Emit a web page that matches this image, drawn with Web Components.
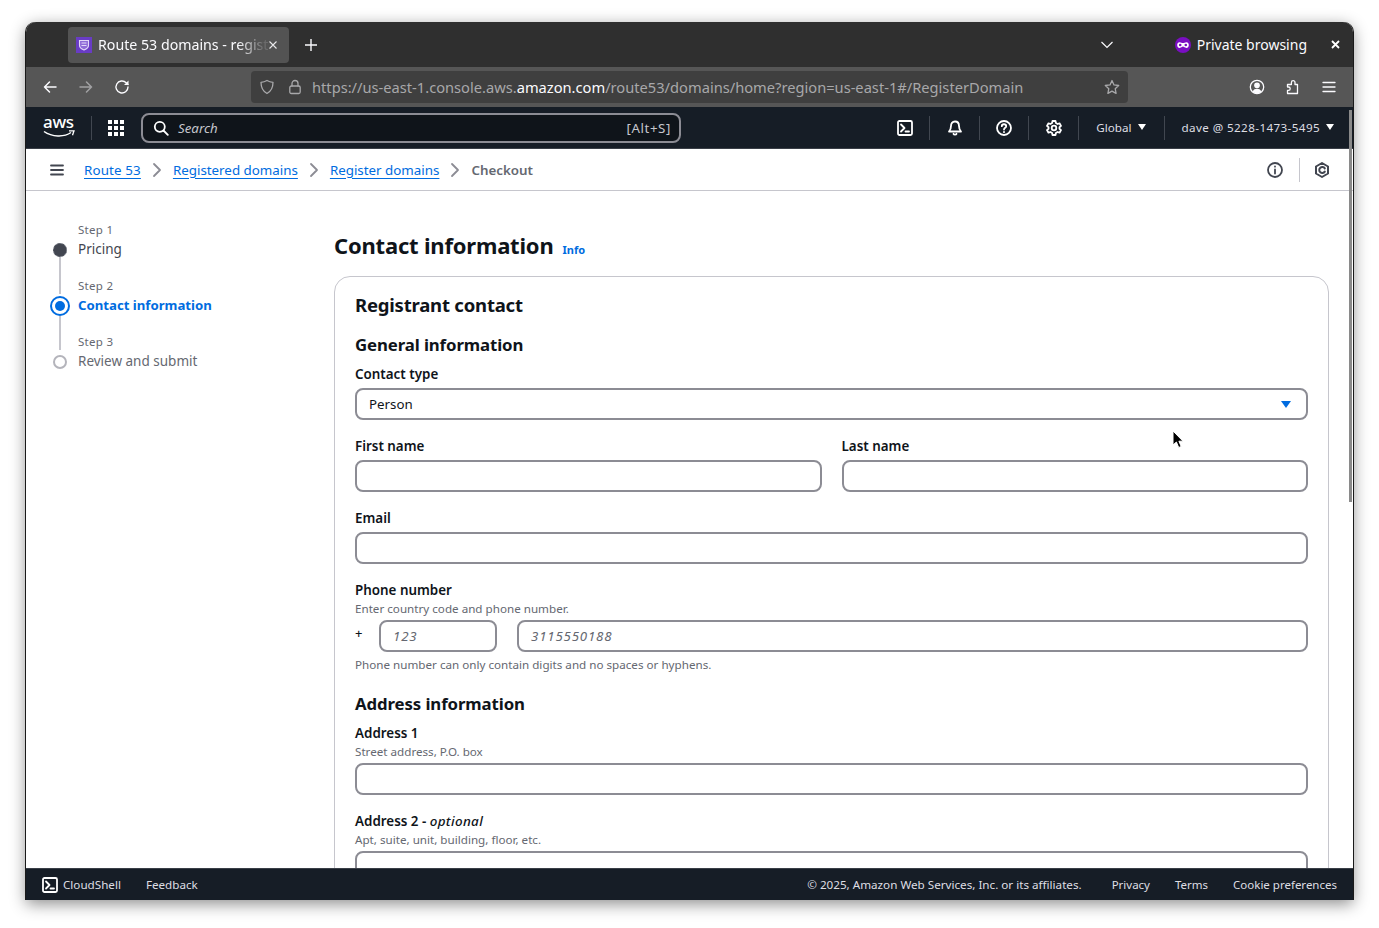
<!DOCTYPE html>
<html>
<head>
<meta charset="utf-8">
<title>Route 53 domains</title>
<style>
html, body { margin: 0; height: 100%; background: #fff; overflow: hidden; }
body { padding: 22px 25px 0 26px; box-sizing: border-box; font-family: "Noto Sans", sans-serif; }
</style>
</head>
<body>
<app-window>
  <browser-tabs></browser-tabs>
  <browser-toolbar></browser-toolbar>
  <aws-topnav></aws-topnav>
  <aws-breadcrumbs></aws-breadcrumbs>
  <wizard-page>
    <wizard-steps slot="steps"></wizard-steps>
    <contact-form></contact-form>
  </wizard-page>
  <aws-footer></aws-footer>
</app-window>

<script>
// svg bodies for the icons, 16x16 box, stroke is currentColor
const ICONS = {
  back: '<path d="M14 8H2.5M7.5 3 2.5 8l5 5"/>',
  forward: '<path d="M2 8h11.5M8.5 3l5 5-5 5"/>',
  reload: '<path d="M14 8a6 6 0 1 1-1.800-4.300L14 5.500"/><path d="M14.500 1.500V6H10z" fill="currentColor" stroke="none"/>',
  shield: '<path d="M8 1.500c2 1.200 3.800 1.700 6 1.800 0 5.200-1.800 9-6 11.200C3.800 12.300 2 8.500 2 3.300c2.200-.1 4-.6 6-1.800z"/>',
  lock: '<rect x="2.800" y="7" width="10.400" height="7.500" rx="1.500"/><path d="M5 7V4.500a3 3 0 0 1 6 0V7"/>',
  star: '<path d="m8 1.500 2 4.400 4.700.6-3.500 3.200.9 4.700L8 12.100l-4.100 2.300.9-4.700L1.300 6.500 6 5.900z"/>',
  account: '<circle cx="8" cy="8" r="6.700"/><circle cx="8" cy="6.300" r="2.200" fill="currentColor"/><path d="M3.600 12.500c1-2 2.600-2.700 4.400-2.700s3.400.7 4.400 2.700c-1.200 1.300-2.700 1.900-4.400 1.900s-3.200-.6-4.400-1.900z" fill="currentColor" stroke="none"/>',
  puzzle: '<path d="M2.500 14.500h10V5.500H10v-2a1.800 1.800 0 0 0-3.600 0v2H2.500V8h1a1.700 1.700 0 0 1 0 3.400h-1z"/>',
  menu: '<path d="M2 3.500h12M2 8h12M2 12.500h12"/>',
  grid: '<g fill="currentColor" stroke="none"><rect x="0" y="0" width="4" height="4"/><rect x="6" y="0" width="4" height="4"/><rect x="12" y="0" width="4" height="4"/><rect x="0" y="6" width="4" height="4"/><rect x="6" y="6" width="4" height="4"/><rect x="12" y="6" width="4" height="4"/><rect x="0" y="12" width="4" height="4"/><rect x="6" y="12" width="4" height="4"/><rect x="12" y="12" width="4" height="4"/></g>',
  search: '<circle cx="6.800" cy="6.800" r="5"/><path d="m10.500 10.500 4.300 4.300"/>',
  shell: '<rect x="1" y="1" width="14" height="14" rx="1.500"/><path d="m4 4.500 3.500 3.500L4 11.500M8.500 11.500h3.500"/>',
  bell: '<path d="M8 1.500c2.800 0 4 2 4 4.500 0 2.500.6 4 2 5.500H2c1.400-1.500 2-3 2-5.500 0-2.500 1.200-4.500 4-4.500z"/><path d="M6.500 13.800c.4 1 2.600 1 3 0"/>',
  help: '<circle cx="8" cy="8" r="7"/><path d="M5.800 6.200C5.800 3.600 10.200 3.600 10.200 6.200 10.200 7.900 8 7.800 8 9.600"/><path d="M8 11.800v.4"/>',
  gear: '<path d="M6.500 1h3l.4 2 1.700 1 1.900-.7 1.500 2.600-1.500 1.300v1.600l1.500 1.300-1.500 2.600-1.900-.7-1.700 1-.4 2h-3l-.4-2-1.700-1-1.900.7L1 10.100l1.500-1.300V7.200L1 5.900l1.500-2.600 1.900.7 1.700-1z"/><circle cx="8" cy="8" r="2.300"/>',
  info: '<circle cx="8" cy="8" r="7"/><path d="M8 7.500v4M8 4.400v.3"/>',
  hexagon: '<path d="M8 1 14 4.500v7L8 15l-6-3.500v-7z"/><path d="M10.800 6.400A3 3 0 1 0 10.800 9.600"/>',
  chevron: '<path d="m5 2 6 6-6 6"/>'
};

// base class, every element here just sets a template string in its shadow root
class BaseElement extends HTMLElement {
  constructor() {
    super();
    this.attachShadow({ mode: "open" });
  }
  connectedCallback() {
    this.render();
  }
  render() {
    const template = document.createElement("template");
    template.innerHTML = this.html;
    this.shadowRoot.appendChild(template.content.cloneNode(true));
  }
}

class UiIcon extends BaseElement {
  get html() {
    const size = this.getAttribute("size") || 16;
    const width = this.getAttribute("stroke") || 2;
    return `
<style>:host { display: inline-flex; flex: none; }
svg { display: block; fill: none; stroke: currentColor; stroke-linecap: round; stroke-linejoin: round; }
</style>
<svg width="${size}" height="${size}" viewBox="0 0 16 16" stroke-width="${width}">${ICONS[this.getAttribute("name")]}</svg>`;
  }
}
customElements.define("ui-icon", UiIcon);

class AppWindow extends BaseElement {
  get html() {
    return `
<style>:host {
  display: flex;
  flex-direction: column;
  position: relative;
  width: 1327px;
  height: 878px;
  border-radius: 10px 10px 0 0;
  box-shadow: -1px 0 0 #1a1a1a, 1px 0 0 #1a1a1a, 0 4px 16px rgba(0,0,0,.45);
}
.clip { display: flex; flex-direction: column; height: 100%; border-radius: 10px 10px 0 0; overflow: hidden; }
.thumb { position: absolute; right: 1px; top: 88px; width: 3px; height: 392px; background: #8a8a8a; }
</style>
<div class="clip"><slot></slot></div>
<span class="thumb"></span>`;
  }
}
customElements.define("app-window", AppWindow);

class BrowserTabs extends BaseElement {
  get html() {
    return `
<style>:host {
  display: flex;
  align-items: center;
  flex: none;
  height: 45px;
  background: #2f2f2f;
  color: #fbfbfe;
  font: 14px "Noto Sans", sans-serif;
}
.tab { display: flex; align-items: center; box-sizing: border-box; width: 221px; height: 36px; margin: 0 0 0 42px; padding: 0 0 0 8px; background: #535353; border-radius: 4px; }
.fav { width: 16px; height: 16px; flex: none; }
.title { width: 170px; margin-left: 6px; white-space: nowrap; font-size: 14.200px; -webkit-mask-image: linear-gradient(to right, #000 82%, rgba(0,0,0,.15) 97%); mask-image: linear-gradient(to right, #000 82%, rgba(0,0,0,.15) 97%); }
.x { flex: none; margin-left: 1px; }
.plus { margin-left: 16px; display: flex; }
.fill { flex: 1; }
.list { margin-right: 62px; display: flex; }
.priv { display: flex; align-items: center; gap: 6px; margin-right: 24px; }
.close { margin-right: 13px; display: flex; }
</style>
<div class="tab">
  <svg class="fav" viewBox="0 0 16 16"><rect width="16" height="16" fill="#693cc5"/><path d="M3.500 3.500h9v5c0 2-2 3.500-4.500 4.500-2.500-1-4.500-2.500-4.500-4.500z" fill="#8f6bd8" stroke="#e3d9f8" stroke-width="1.100"/><path d="M5.500 6h5M5.500 8.500h5" stroke="#e3d9f8"/></svg>
  <span class="title">Route 53 domains - regist</span>
  <svg class="x" width="8" height="8" viewBox="0 0 8 8"><path d="M.5.500l7 7M7.500.500l-7 7" stroke="#e8e8ea" stroke-width="1.100"/></svg>
</div>
<span class="plus"><svg width="12" height="12" viewBox="0 0 12 12"><path d="M6 0v12M0 6h12" stroke="#fbfbfe" stroke-width="1.400"/></svg></span>
<span class="fill"></span>
<span class="list"><svg width="12" height="8" viewBox="0 0 12 8"><path d="m.5 1 5.500 5.500L11.500 1" fill="none" stroke="#fbfbfe" stroke-width="1.200"/></svg></span>
<span class="priv">
  <svg width="16" height="16" viewBox="0 0 16 16"><circle cx="8" cy="8" r="8" fill="#7a0ec2"/><path d="M4.600 5.200c1.300 0 2.300.8 3.400.8s2.100-.8 3.400-.8c1.500 0 2.400 1.200 2.400 2.700 0 1.800-1.100 3-2.500 3-1.500 0-2.200-1.300-3.300-1.300s-1.800 1.300-3.300 1.300c-1.400 0-2.500-1.200-2.500-3 0-1.500.9-2.700 2.400-2.700z" fill="#fff"/><circle cx="5.200" cy="8" r="1.300" fill="#7a0ec2"/><circle cx="10.800" cy="8" r="1.300" fill="#7a0ec2"/></svg>
  Private browsing
</span>
<span class="close"><svg width="9" height="9" viewBox="0 0 9 9"><path d="M1 1l7 7M8 1 1 8" stroke="#fff" stroke-width="1.800"/></svg></span>`;
  }
}
customElements.define("browser-tabs", BrowserTabs);

class BrowserToolbar extends BaseElement {
  get html() {
    return `
<style>:host {
  display: flex;
  align-items: center;
  flex: none;
  height: 40px;
  background: #565656;
  color: #fbfbfe;
}
.nav { display: flex; width: 36px; justify-content: center; }
.first { margin-left: 6px; }
.dim { opacity: .45; }
.url {
  display: flex;
  align-items: center;
  box-sizing: border-box;
  width: 877px;
  height: 32px;
  margin-left: 111px;
  padding: 0 8px;
  background: #3f3f3f;
  border-radius: 4px;
  font: 14.660px "Noto Sans", sans-serif;
  color: #a8a8aa;
}
.url b { font-weight: 400; color: #fbfbfe; }
.addr { flex: 1; margin-left: 9px; white-space: nowrap; }
.url ui-icon:nth-child(2) { margin-left: 12px; }
.tools { display: flex; margin-left: 111px; }
.tools span { display: flex; width: 36px; justify-content: center; }
</style>
<span class="nav first"><ui-icon name="back" stroke="1.500"></ui-icon></span>
<span class="nav dim"><ui-icon name="forward" stroke="1.500"></ui-icon></span>
<span class="nav"><ui-icon name="reload" stroke="1.400"></ui-icon></span>
<div class="url">
  <ui-icon name="shield" stroke="1.300"></ui-icon>
  <ui-icon name="lock" stroke="1.300"></ui-icon>
  <span class="addr">https://us-east-1.console.aws.<b>amazon.com</b>/route53/domains/home?region=us-east-1#/RegisterDomain</span>
  <ui-icon name="star" stroke="1.300"></ui-icon>
</div>
<div class="tools">
  <span><ui-icon name="account" stroke="1.300"></ui-icon></span>
  <span><ui-icon name="puzzle" stroke="1.300"></ui-icon></span>
  <span><ui-icon name="menu" stroke="1.300"></ui-icon></span>
</div>`;
  }
}
customElements.define("browser-toolbar", BrowserToolbar);

class AwsTopnav extends BaseElement {
  get html() {
    return `
<style>:host {
  display: flex;
  align-items: center;
  flex: none;
  box-sizing: border-box;
  height: 42px;
  background: #161d26;
  color: #fff;
  border-bottom: 1px solid #3a3f47;
  font: 12px "Noto Sans", sans-serif;
}
.logo { position: relative; width: 32px; height: 26px; margin-left: 17px; flex: none; }
.logo span { position: absolute; left: 0; top: -4px; font: 500 17px/22px "Noto Sans", sans-serif; letter-spacing: -.3px; }
.logo svg { position: absolute; left: 0; top: 15px; }
.sep { width: 1px; height: 24px; background: #414750; flex: none; }
.search {
  display: flex;
  align-items: center;
  box-sizing: border-box;
  width: 540px;
  height: 30px;
  margin-left: 17px;
  padding: 0 8px 0 10px;
  background: #0f141a;
  border: 2px solid #8c8c94;
  border-radius: 8px;
  color: #c6c6cd;
  font-size: 13.300px;
}
.search i { margin-left: 9px; flex: 1; }
.search span { letter-spacing: .6px; }
.search ui-icon { color: #fff; }
.icon { display: flex; justify-content: center; width: 49px; }
.right { margin-left: auto; display: flex; align-items: center; }
.menu { display: flex; align-items: center; gap: 6px; color: #dedee3; white-space: nowrap; padding: 0 18px 0 17px; font-size: 11.650px; }
.acct { letter-spacing: .4px; padding-right: 19px; }
.caret { width: 0; height: 0; border-left: 4px solid transparent; border-right: 4px solid transparent; border-top: 6px solid #fff; margin-top: -2px; }
</style>
<div class="logo"><span>aws</span>
  <svg width="32" height="9" viewBox="0 0 32 9"><path d="M1 1.500c8 5.500 20 6 27 1" fill="none" stroke="#fff" stroke-width="1.500"/><path d="M26 .8h5l-1.500 4.500" fill="none" stroke="#fff" stroke-width="1.300"/></svg>
</div>
<span class="sep" style="margin-left:16px"></span>
<span style="display:flex;margin-left:16px"><ui-icon name="grid"></ui-icon></span>
<div class="search"><ui-icon name="search" stroke="1.800"></ui-icon><i>Search</i><span>[Alt+S]</span></div>
<div class="right">
  <span class="icon"><ui-icon name="shell" stroke="1.800"></ui-icon></span><span class="sep"></span>
  <span class="icon"><ui-icon name="bell" stroke="1.800"></ui-icon></span><span class="sep"></span>
  <span class="icon" style="width:48px"><ui-icon name="help" stroke="1.800"></ui-icon></span><span class="sep"></span>
  <span class="icon"><ui-icon name="gear" stroke="1.800"></ui-icon></span><span class="sep"></span>
  <span class="menu">Global <span class="caret"></span></span><span class="sep"></span>
  <span class="menu acct">dave @ 5228-1473-5495 <span class="caret"></span></span>
</div>`;
  }
}
customElements.define("aws-topnav", AwsTopnav);

class AwsBreadcrumbs extends BaseElement {
  get html() {
    return `
<style>:host {
  display: flex;
  align-items: center;
  flex: none;
  box-sizing: border-box;
  height: 42px;
  background: #fff;
  border-bottom: 1px solid #c6c6cd;
  font: 13.350px "Noto Sans", sans-serif;
  color: #0972d3;
}
.menu { display: flex; margin: 0 19px 0 23px; color: #424650; }
a { color: #006ce0; text-decoration: underline; text-underline-offset: 3px; white-space: nowrap; }
.chev { display: flex; margin: 0 8px; color: #8c8c94; }
b { color: #656871; font-weight: 600; }
.right { margin-left: auto; display: flex; align-items: center; color: #424650; }
.sep { width: 1px; height: 24px; background: #c6c6cd; margin: 0 14px 0 16px; }
.right ui-icon:last-child { margin-right: 23px; }
</style>
<span class="menu"><ui-icon name="menu" stroke="1.800"></ui-icon></span>
<a style="letter-spacing:.15px">Route 53</a><span class="chev"><ui-icon name="chevron" size="16" stroke="1.800"></ui-icon></span>
<a>Registered domains</a><span class="chev"><ui-icon name="chevron" size="16" stroke="1.800"></ui-icon></span>
<a>Register domains</a><span class="chev"><ui-icon name="chevron" size="16" stroke="1.800"></ui-icon></span>
<b>Checkout</b>
<div class="right">
  <ui-icon name="info" stroke="1.800"></ui-icon><span class="sep"></span><ui-icon name="hexagon" stroke="2"></ui-icon>
</div>`;
  }
}
customElements.define("aws-breadcrumbs", AwsBreadcrumbs);

class WizardPage extends BaseElement {
  get html() {
    return `
<style>:host {
  display: flex;
  flex: 1;
  min-height: 0;
  position: relative;
  overflow: hidden;
  background: #fff;
  color: #0f141a;
}
.steps { width: 308px; flex: none; padding-top: 31px; }
.main { flex: 1; min-width: 0; }
.cursor { position: absolute; left: 1146px; top: 239px; }
</style>
<div class="steps"><slot name="steps"></slot></div>
<div class="main"><slot></slot></div>
<svg class="cursor" width="13" height="20" viewBox="0 0 13 20"><path d="M1 1v14l3.400-3 2.300 5.500 2.500-1-2.300-5.300H11z" fill="#000" stroke="#fff" stroke-width="1"/></svg>`;
  }
}
customElements.define("wizard-page", WizardPage);

class WizardSteps extends BaseElement {
  get html() {
    return `
<style>:host {
  display: grid;
  grid-template-columns: 52px 1fr;
  font: 13.500px "Noto Sans", sans-serif;
  color: #424650;
}
.step { grid-column: 2; font-size: 11.500px; line-height: 16px; color: #656871; height: 16px; letter-spacing: .3px; }
.name { grid-column: 2; line-height: 22px; height: 40px; white-space: nowrap; }
.mark { grid-column: 1; position: relative; height: 40px; }
.dot { position: absolute; box-sizing: border-box; left: 27px; top: 5px; width: 14px; height: 14px; border-radius: 50%; }
.done { background: #424650; border: 1px dashed #6a6f7a; }
.now { left: 24px; top: 2px; width: 20px; height: 20px; border: 2px solid #006ce0; background: #fff; }
.now::after { content: ""; position: absolute; left: 3px; top: 3px; width: 10px; height: 10px; border-radius: 50%; background: #006ce0; }
.todo { border: 2px solid #b4b4bb; background: #fff; }
.line { position: absolute; left: 33px; width: 2px; top: 19px; height: 37px; background: #c6c6cd; }
.on { color: #006ce0; font-weight: 700; font-size: 13.200px; }
.muted { color: #656871; }
.spacer { grid-column: 1; grid-row: span 1; height: 16px; }
</style>
<span class="spacer"></span><span class="step">Step 1</span>
<span class="mark"><span class="line"></span><span class="dot done"></span></span><span class="name">Pricing</span>
<span class="spacer"></span><span class="step">Step 2</span>
<span class="mark"><span class="line" style="top:22px;height:34px"></span><span class="dot now"></span></span><span class="name on">Contact information</span>
<span class="spacer"></span><span class="step">Step 3</span>
<span class="mark"><span class="dot todo"></span></span><span class="name muted">Review and submit</span>`;
  }
}
customElements.define("wizard-steps", WizardSteps);

class AwsInput extends BaseElement {
  get html() {
    const ph = this.getAttribute("placeholder") || "";
    const val = this.getAttribute("value") || "";
    const caret = this.hasAttribute("select") ? '<span class="caret"></span>' : "";
    return `
<style>:host {
  display: flex;
  align-items: center;
  box-sizing: border-box;
  height: 32px;
  padding: 0 15px 0 12px;
  border: 2px solid #8c8c94;
  border-radius: 8px;
  background: #fff;
  font-size: 13.300px;
  color: #0f141a;
}
i { color: #656871; letter-spacing: .8px; }
.caret { margin-left: auto; width: 0; height: 0; border-left: 5px solid transparent; border-right: 5px solid transparent; border-top: 7px solid #006ce0; }
</style>
${ph ? `<i>${ph}</i>` : ""}<span>${val}</span>${caret}`;
  }
}
customElements.define("aws-input", AwsInput);

class FormField extends BaseElement {
  get html() {
    const label = this.getAttribute("label");
    const desc = this.getAttribute("desc");
    const hint = this.getAttribute("hint");
    return `
<style>:host {
  display: block;
  font: 13.400px "Noto Sans", sans-serif;
  color: #0f141a;
}
label { display: block; font-weight: 600; line-height: 20px; height: 20px; margin-bottom: 4px; white-space: nowrap; }
label i { font-weight: 500; letter-spacing: .35px; }
.desc { font-size: 11.650px; line-height: 16px; color: #656871; margin: -3px 0 3px; white-space: nowrap; }
.hint { font-size: 11.650px; line-height: 16px; color: #656871; margin-top: 5px; }
</style>
<label>${label}</label>
${desc ? `<div class="desc">${desc}</div>` : ""}
<slot></slot>
${hint ? `<div class="hint">${hint}</div>` : ""}`;
  }
}
customElements.define("form-field", FormField);

class ContactForm extends BaseElement {
  get html() {
    return `
<style>:host {
  display: block;
  width: 995px;
  font-family: "Noto Sans", sans-serif;
  color: #0f141a;
}
.head { display: flex; align-items: baseline; gap: 9px; height: 33px; padding-top: 38px; margin-bottom: 14px; }
h1 { margin: 0; font-size: 22px; font-weight: 700; line-height: 33px; white-space: nowrap; letter-spacing: -.2px; }
.info { color: #006ce0; font-size: 11px; font-weight: 700; }
.card {
  box-sizing: border-box;
  height: 700px;
  padding: 15px 20px 0;
  border: 1px solid #c6c6cd;
  border-radius: 16px;
}
h2 { margin: 0; font-size: 18.500px; font-weight: 700; line-height: 26px; letter-spacing: -.2px; }
h3 { margin: 0; font-size: 16.800px; font-weight: 700; line-height: 24px; letter-spacing: -.1px; }
.g1 { margin-top: 15px; }
.g2 { margin-top: 7px; }
.row { display: grid; grid-template-columns: 1fr 1fr; gap: 20px; margin-top: 16px; }
.f { margin-top: 16px; }
.phone { display: flex; align-items: flex-start; }
.plus { width: 24px; flex: none; font-size: 13px; font-weight: 500; line-height: 26px; }
.code { width: 118px; flex: none; margin-right: 20px; }
.num { flex: 1; }
.addr { margin-top: 19px; }
</style>
<div class="head"><h1>Contact information</h1><span class="info">Info</span></div>
<div class="card">
  <h2>Registrant contact</h2>
  <h3 class="g1">General information</h3>
  <form-field class="g2" label="Contact type"><aws-input select value="Person"></aws-input></form-field>
  <div class="row">
    <form-field label="First name"><aws-input></aws-input></form-field>
    <form-field label="Last name"><aws-input></aws-input></form-field>
  </div>
  <form-field class="f" label="Email"><aws-input></aws-input></form-field>
  <form-field class="f" label="Phone number" desc="Enter country code and phone number." hint="Phone number can only contain digits and no spaces or hyphens.">
    <div class="phone">
      <span class="plus">+</span>
      <aws-input class="code" placeholder="123"></aws-input>
      <aws-input class="num" placeholder="3115550188"></aws-input>
    </div>
  </form-field>
  <h3 class="addr">Address information</h3>
  <form-field class="g2" label="Address 1" desc="Street address, P.O. box"><aws-input></aws-input></form-field>
  <form-field class="f" label="Address 2 - <i>optional</i>" desc="Apt, suite, unit, building, floor, etc."><aws-input></aws-input></form-field>
</div>`;
  }
}
customElements.define("contact-form", ContactForm);

class AwsFooter extends BaseElement {
  get html() {
    return `
<style>:host {
  display: flex;
  align-items: center;
  flex: none;
  position: relative;
  box-sizing: border-box;
  height: 32px;
  padding: 0 16px;
  background: #161d26;
  border-top: 1px solid #3a3f47;
  color: #dedee3;
  font: 11.650px "Noto Sans", sans-serif;
  white-space: nowrap;
}
.shell { display: flex; align-items: center; gap: 5px; margin-right: 25px; }
.shell ui-icon { color: #fff; }
.right { margin-left: auto; display: flex; gap: 25px; font-size: 11.500px; }
.right span:first-child { margin-right: 5px; font-size: 11.670px; }
</style>
<span class="shell"><ui-icon name="shell" stroke="1.800"></ui-icon>CloudShell</span>
<span>Feedback</span>
<div class="right">
  <span>© 2025, Amazon Web Services, Inc. or its affiliates.</span>
  <span>Privacy</span><span>Terms</span><span>Cookie preferences</span>
</div>`;
  }
}
customElements.define("aws-footer", AwsFooter);
</script>
</body>
</html>
